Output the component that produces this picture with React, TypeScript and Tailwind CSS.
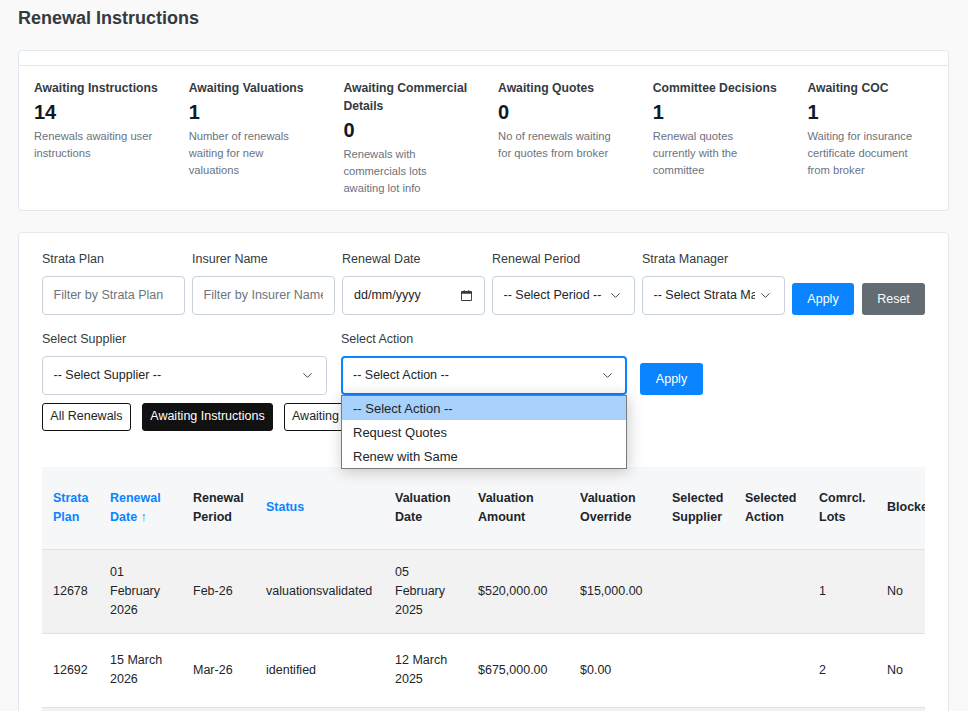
import { ChevronDown } from "lucide-react";

const stats = [
  { title: "Awaiting Instructions", value: "14", text: "Renewals awaiting user instructions" },
  { title: "Awaiting Valuations", value: "1", text: "Number of renewals waiting for new valuations" },
  { title: "Awaiting Commercial Details", value: "0", text: "Renewals with commercials lots awaiting lot info" },
  { title: "Awaiting Quotes", value: "0", text: "No of renewals waiting for quotes from broker" },
  { title: "Committee Decisions", value: "1", text: "Renewal quotes currently with the committee" },
  { title: "Awaiting COC", value: "1", text: "Waiting for insurance certificate document from broker" },
];

const rows = [
  ["12678", "01 February 2026", "Feb-26", "valuationsvalidated", "05 February 2025", "$520,000.00", "$15,000.00", "", "", "1", "No"],
  ["12692", "15 March 2026", "Mar-26", "identified", "12 March 2025", "$675,000.00", "$0.00", "", "", "2", "No"],
  ["", "", "", "", "", "", "", "", "", "", ""],
];

function Field({ label, children }: { label: string; children: React.ReactNode }) {
  return (
    <div className="flex flex-col">
      <label className="text-[12.5px] leading-[18px] pt-[1px] text-[#343a40] mb-[8px]">{label}</label>
      {children}
    </div>
  );
}

function SelectBox({ text, focused = false, className = "" }: { text: string; focused?: boolean; className?: string }) {
  const frame = focused
    ? "border-2 border-[#0a84ff] pl-[10px] pr-[10px]"
    : "border border-[#c9d2dc] pl-[10.5px] pr-[11px]";
  return (
    <div className={`h-[39px] flex items-center bg-white rounded-[4px] text-[12.5px] text-[#212529] ${frame} ${className}`}>
      <span className="flex-1 overflow-hidden whitespace-nowrap pb-[1px]">{text}</span>
      <ChevronDown className="w-[15px] h-[15px] ml-[3px] shrink-0 text-[#343a40]" strokeWidth={1.5} />
    </div>
  );
}

function TextFilter({ placeholder }: { placeholder: string }) {
  return (
    <input
      readOnly
      placeholder={placeholder}
      className="w-[143px] h-[39px] pl-[10.5px] pr-[11px] pb-[1px] bg-white border border-[#c9d2dc] rounded-[4px] text-[12.5px] placeholder:text-[#6c757d] outline-none"
    />
  );
}

export default function App() {
  return (
    <div className="h-screen overflow-hidden bg-[#f9f9fa] px-[18px] pt-[8px] font-['Liberation_Sans',Arial,sans-serif]">
      <h1 className="text-[18px] leading-[21px] font-bold text-[#343a40] mb-[21px]">Renewal Instructions</h1>

      <div className="w-[931px] h-[161px] bg-white border border-[#e2e8f0] rounded-[4px] mb-[21px]">
        <div className="h-[15px] border-b border-[#e2e8f0]" />
        <div className="grid grid-cols-[repeat(6,154.7px)] pl-[15px] pt-[13px]">
          {stats.map((s) => (
            <div key={s.title} className="pr-[28px]">
              <div className="text-[12.2px] leading-[18px] font-bold text-[#343a40]">{s.title}</div>
              <div className="text-[20px] leading-[24px] font-bold text-[#111827] mt-[3px] mb-[4px]">{s.value}</div>
              <div className="max-w-[120px] text-[11.2px] leading-[17px] text-[#6b7280]">{s.text}</div>
            </div>
          ))}
        </div>
      </div>

      <div className="w-[931px] h-[600px] bg-white border border-[#e2e8f0] rounded-[4px] px-[23px] pt-[16px]">
        <div className="flex gap-[7px] items-end">
          <Field label="Strata Plan"><TextFilter placeholder="Filter by Strata Plan" /></Field>
          <Field label="Insurer Name"><TextFilter placeholder="Filter by Insurer Name" /></Field>
          <Field label="Renewal Date">
            <div className="w-[143px] h-[39px] flex items-center justify-between pl-[11px] pr-[12px] border border-[#c9d2dc] rounded-[4px] text-[12.5px] text-[#212529]">
              <span className="pb-[1px]">dd/mm/yyyy</span>
              <svg viewBox="0 0 12 12" className="w-[11px] h-[11px]" fill="#343a40">
                <path d="M3 0h1v1h4V0h1v1h2a1 1 0 0 1 1 1v9a1 1 0 0 1-1 1H1a1 1 0 0 1-1-1V2a1 1 0 0 1 1-1h2V0ZM1 4v7h10V4H1Z" />
              </svg>
            </div>
          </Field>
          <Field label="Renewal Period"><SelectBox text="-- Select Period --" className="w-[143px]" /></Field>
          <Field label="Strata Manager"><SelectBox text="-- Select Strata Manager --" className="w-[143px]" /></Field>
          <button className="w-[62px] h-[32px] bg-[#0a84ff] text-white text-[12.5px] rounded-[3px]">Apply</button>
          <button className="w-[63px] h-[32px] ml-[1px] bg-[#636c72] text-white text-[12.5px] rounded-[3px]">Reset</button>
        </div>

        <div className="flex items-end mt-[14px]">
          <div className="w-[285px]">
            <Field label="Select Supplier"><SelectBox text="-- Select Supplier --" /></Field>
          </div>
          <div className="relative w-[286px] ml-[14px]">
            <Field label="Select Action">
              <SelectBox text="-- Select Action --" focused />
            </Field>
            <div className="absolute z-10 left-0 top-[66px] w-[286px] h-[74px] bg-white border border-[#7a7a7a] shadow-[1px_2px_14px_rgba(0,0,0,0.22)] text-[13px] text-[#212529]">
              <div className="h-[24px] leading-[26px] pl-[11px] bg-[#a8d1fb]">-- Select Action --</div>
              <div className="h-[24px] leading-[26px] pl-[11px]">Request Quotes</div>
              <div className="h-[24px] leading-[26px] pl-[11px]">Renew with Same</div>
            </div>
          </div>
          <button className="w-[63px] h-[32px] ml-[13px] bg-[#0a84ff] text-white text-[12.5px] rounded-[3px]">Apply</button>
        </div>

        <div className="flex gap-[11px] mt-[8px] text-[12.5px]">
          <div className="w-[89px] h-[28px] flex items-center justify-center pb-[2px] border border-[#111] rounded-[3px] text-[#212529]">All Renewals</div>
          <div className="w-[131px] h-[28px] flex items-center justify-center pb-[2px] bg-[#111] border border-[#111] rounded-[3px] text-white">Awaiting Instructions</div>
          <div className="w-[120px] h-[28px] flex items-center pl-[7px] pb-[2px] border border-[#111] rounded-[3px] text-[#212529] whitespace-nowrap overflow-hidden">Awaiting Valuations</div>
        </div>

        <div className="mt-[36px] overflow-hidden">
          <table className="table-fixed w-[950px] text-[12.5px] leading-[19px] text-[#212529] border-collapse">
            <thead className="bg-[#f6f7f9]">
              <tr className="h-[82px] border-b border-[#dee2e6] text-left font-bold">
                <th className="w-[57px] px-[11px] text-[#0a84ff]">Strata Plan</th>
                <th className="w-[83px] px-[11px] text-[#0a84ff]">Renewal Date ↑</th>
                <th className="w-[73px] px-[11px]">Renewal Period</th>
                <th className="w-[129px] px-[11px] text-[#0a84ff]">Status</th>
                <th className="w-[83px] px-[11px]">Valuation Date</th>
                <th className="w-[102px] px-[11px]">Valuation Amount</th>
                <th className="w-[92px] px-[11px]">Valuation Override</th>
                <th className="w-[73px] px-[11px]">Selected Supplier</th>
                <th className="w-[74px] px-[11px]">Selected Action</th>
                <th className="w-[68px] px-[11px]">Comrcl. Lots</th>
                <th className="w-[116px] px-[11px] whitespace-nowrap">Blocked</th>
              </tr>
            </thead>
            <tbody>
              {rows.map((r, i) => (
                <tr key={i} className={`border-b border-[#dee2e6] ${i % 2 === 0 ? "bg-[#f2f2f2]" : "bg-white"} ${i === 0 ? "h-[84px]" : "h-[74px]"}`}>
                  {r.map((c, j) => (
                    <td key={j} className="px-[11px]">{c}</td>
                  ))}
                </tr>
              ))}
            </tbody>
          </table>
        </div>
      </div>
    </div>
  );
}
